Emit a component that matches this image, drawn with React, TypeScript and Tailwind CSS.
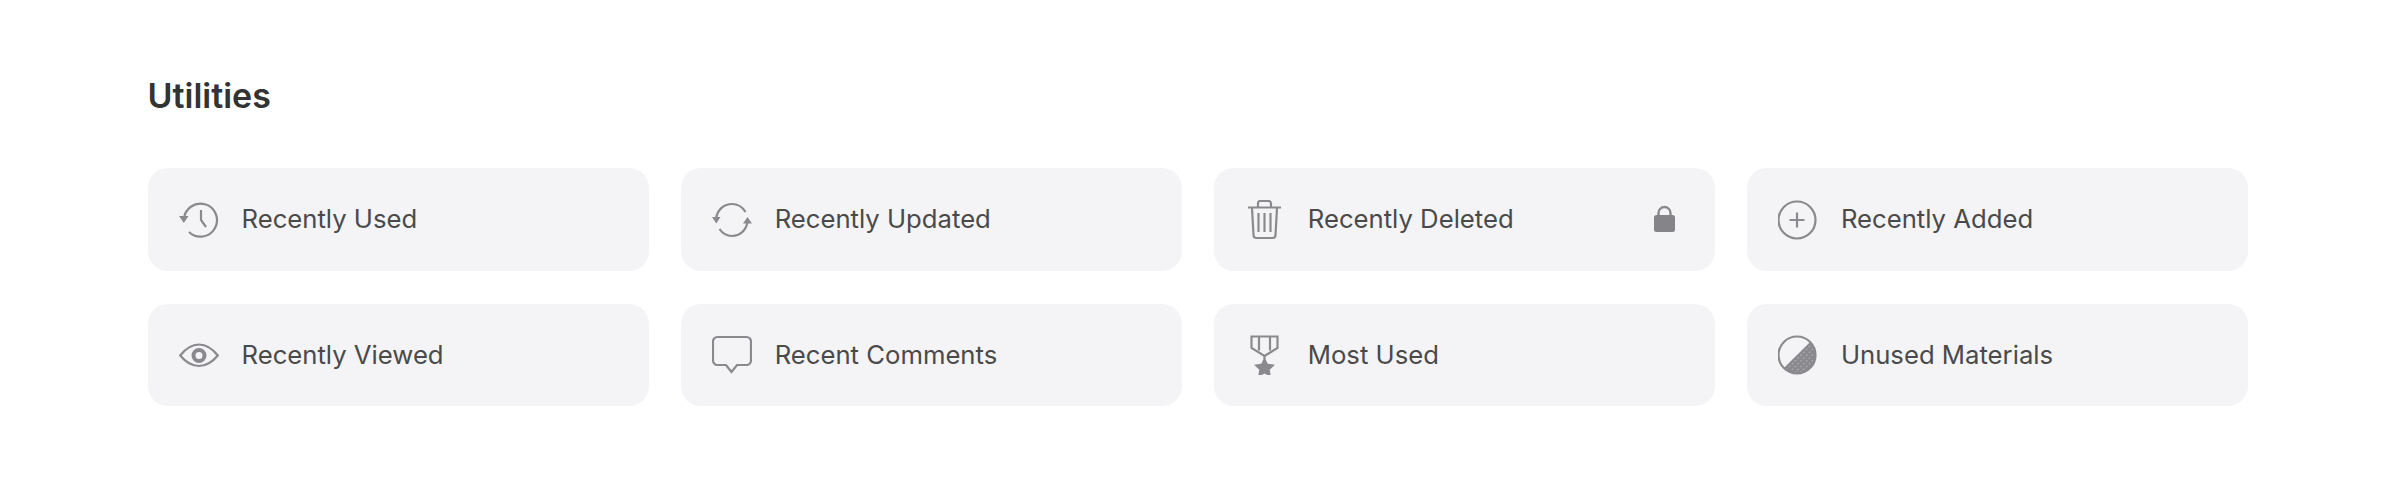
import React from 'react';

const stroke = '#8a8a8e';

function Svg({ children }: { children: React.ReactNode }) {
  return (
    <svg width="40" height="40" viewBox="0 0 40 40" fill="none" stroke={stroke} strokeWidth="2.2" className="shrink-0">
      {children}
    </svg>
  );
}

const HistoryIcon = () => (
  <Svg>
    <path d="M5 19.5A16.5 16.5 0 1 1 10 32" />
    <path d="M0 16h9.5l-4.7 7z" fill={stroke} stroke="none" />
    <path d="M22 10v10l5 7" />
  </Svg>
);

const SyncIcon = () => (
  <Svg>
    <path d="M4.2 18C5.5 9.5 12 4 20 4c6 0 10.500 3 13.500 8" />
    <path d="M35.500 22C34 30.500 28 36 20 36c-5.500 0-9.500-2.500-12.500-7" />
    <path d="M0 17h8.500l-4.200 6.500z" fill={stroke} stroke="none" />
    <path d="M31 23.500h9L35.500 17z" fill={stroke} stroke="none" />
  </Svg>
);

const TrashIcon = () => (
  <Svg>
    <path d="M3 7.500h33" />
    <path d="M13 7V3.500a2.500 2.500 0 0 1 2.500-2.500h8A2.500 2.500 0 0 1 26 3.500V7" />
    <path d="M7 8l1.500 27a3 3 0 0 0 3 3h16a3 3 0 0 0 3-3L32 8" />
    <path d="M13.500 13v19M19.500 13v19M25.500 13v19" />
  </Svg>
);

const PlusCircleIcon = () => (
  <Svg>
    <circle cx="19" cy="20" r="18.500" />
    <path d="M19 12.500v15M11.500 20h15" />
  </Svg>
);

const EyeIcon = () => (
  <Svg>
    <path d="M1.200 20.500C7 13 13 9.500 20 9.500s13 3.500 18.800 11C33 27.500 27 31 20 31S7 27.500 1.200 20.500z" />
    <circle cx="20" cy="20.500" r="5.500" strokeWidth="4" />
  </Svg>
);

const CommentIcon = () => (
  <Svg>
    <path d="M5.500 2h29A4.500 4.500 0 0 1 39 6.500v19a4.500 4.500 0 0 1-4.500 4.500H25l-5.500 7-5.500-7H5.500A4.500 4.500 0 0 1 1 25.500v-19A4.500 4.500 0 0 1 5.500 2z" />
  </Svg>
);

const MedalIcon = () => (
  <Svg>
    <path d="M6.500 1.500h26V13L19.500 21 6.500 13z" />
    <path d="M14 1.500v14M25 1.500v14M19.500 20v4" />
    <path
      d="M19.500 22l3.200 6.700 7.300 1-5.300 5.100 1.300 7.200-6.500-3.500L13 42l1.300-7.200L9 29.700l7.300-1z"
      fill={stroke}
      stroke="none"
    />
  </Svg>
);

const HalfCircleIcon = () => (
  <Svg>
    <defs>
      <pattern id="hatch" width="4" height="4" patternUnits="userSpaceOnUse" patternTransform="rotate(45)">
        <rect width="4" height="4" fill="#e6e6e8" />
        <rect width="1.400" height="4" fill="#8a8a8e" />
      </pattern>
    </defs>
    <path d="M32.100 6.900A18.500 18.500 0 0 1 5.900 33.100z" fill="url(#hatch)" stroke="none" />
    <circle cx="19" cy="20" r="18.500" />
  </Svg>
);

const LockIcon = () => (
  <svg width="21" height="27" viewBox="0 0 21 27" fill="none" className="shrink-0">
    <path d="M4.500 12V8a6 6 0 0 1 12 0v4" stroke={stroke} strokeWidth="2.4" />
    <rect x="0" y="10" width="21" height="17" rx="2.500" fill="#858589" />
  </svg>
);

const items = [
  { label: 'Recently Used', icon: <HistoryIcon /> },
  { label: 'Recently Updated', icon: <SyncIcon /> },
  { label: 'Recently Deleted', icon: <TrashIcon />, locked: true },
  { label: 'Recently Added', icon: <PlusCircleIcon /> },
  { label: 'Recently Viewed', icon: <EyeIcon /> },
  { label: 'Recent Comments', icon: <CommentIcon /> },
  { label: 'Most Used', icon: <MedalIcon /> },
  { label: 'Unused Materials', icon: <HalfCircleIcon /> },
];

export default function App() {
  return (
    <div className="h-[486px] bg-white pl-[147.5px] pr-[152px] pt-[74px] font-['Inter',sans-serif]">
      <h2 className="text-[34px] leading-[44px] font-semibold text-[#333333]">Utilities</h2>

      <div className="mt-[50px] grid grid-cols-4 grid-rows-[103px_102px] gap-x-[32px] gap-y-[33px]">
        {items.map((item) => (
          <div
            key={item.label}
            className="flex h-full items-center rounded-[20px] bg-[#f4f4f6] pl-[31px] pr-[40px]"
          >
            {item.icon}
            <span className="ml-[23px] text-[25.7px] text-[#4a4a4a]">{item.label}</span>
            {item.locked && (
              <span className="ml-auto mb-[2px] flex">
                <LockIcon />
              </span>
            )}
          </div>
        ))}
      </div>
    </div>
  );
}
